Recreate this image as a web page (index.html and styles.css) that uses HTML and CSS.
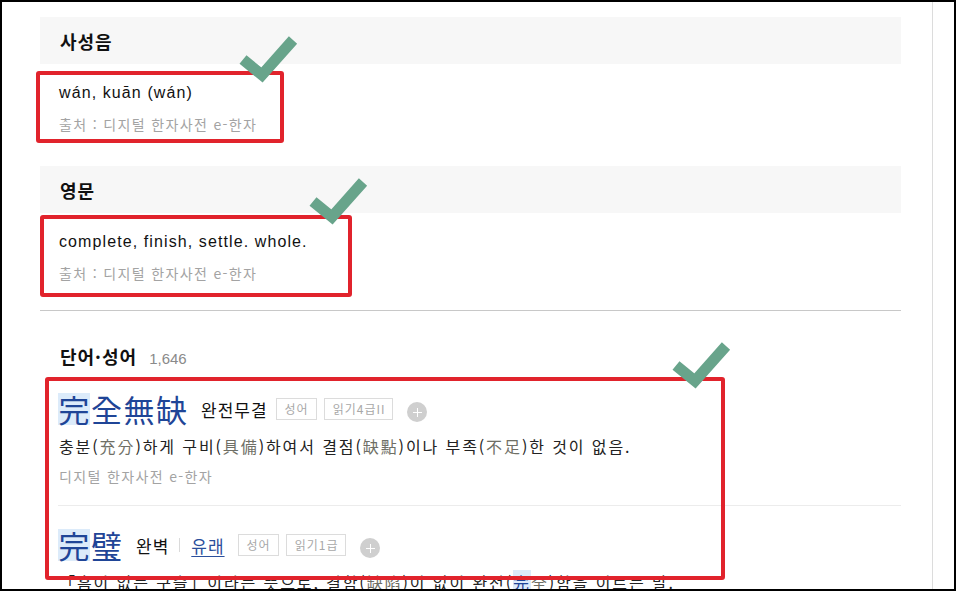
FILE: index.html
```html
<!DOCTYPE html>
<html lang="ko">
<head>
<meta charset="utf-8">
<title>完</title>
<link rel="stylesheet" href="styles.css">
</head>
<body>
<div class="frame">
  <main class="main">
    <section class="sec">
      <h3 class="sec-head">사성음</h3>
      <div class="sec-body">
        <p class="val">wán, kuān (wán)</p>
        <p class="src">출처 : 디지털 한자사전 e-한자</p>
      </div>
    </section>
    <section class="sec sec-en">
      <h3 class="sec-head">영문</h3>
      <div class="sec-body">
        <p class="val">complete, finish, settle. whole.</p>
        <p class="src">출처 : 디지털 한자사전 e-한자</p>
      </div>
    </section>
    <hr class="divider">
    <section class="words">
      <h3 class="words-head">단어·성어 <span class="count">1,646</span></h3>
      <ul class="word-list">
        <li class="word">
          <div class="word-row">
            <span class="hanja"><span class="ch hl">完</span><span class="ch">全</span><span class="ch">無</span><span class="ch">缺</span></span>
            <span class="reading">완전무결</span>
            <span class="tags"><span class="tag">성어</span><span class="tag">읽기4급II</span></span>
            <span class="plus"></span>
          </div>
          <p class="def">충분(<span class="hj">充分</span>)하게 구비(<span class="hj">具備</span>)하여서 결점(<span class="hj">缺點</span>)이나 부족(<span class="hj">不足</span>)한 것이 없음.</p>
          <p class="src">디지털 한자사전 e-한자</p>
        </li>
        <li class="word">
          <div class="word-row">
            <span class="hanja"><span class="ch hl">完</span><span class="ch">璧</span></span>
            <span class="reading">완벽</span>
            <span class="sep"></span>
            <a class="origin" href="#">유래</a>
            <span class="tags"><span class="tag">성어</span><span class="tag">읽기1급</span></span>
            <span class="plus"></span>
          </div>
          <p class="def">「흠이 없는 구슬」이라는 뜻으로, 결함(<span class="hj">缺陷</span>)이 없이 완전(<span class="hj"><span class="hl">完</span>全</span>)함을 이르는 말.</p>
        </li>
      </ul>
    </section>
  </main>
  <aside class="side"></aside>
</div>

<div class="box box-1"></div>
<div class="box box-2"></div>
<div class="box box-3"></div>

<svg class="check check-1" width="64" height="56" viewBox="0 0 64 56"><polyline points="7,27.5 26,43 57,8"/></svg>
<svg class="check check-2" width="64" height="56" viewBox="0 0 64 56"><polyline points="7,27.5 26,43 57,8"/></svg>
<svg class="check check-3" width="64" height="56" viewBox="0 0 64 56"><polyline points="7,27.5 26,43 57,8"/></svg>
</body>
</html>
```

FILE: styles.css
```css
* { box-sizing: border-box; }

html, body {
  margin: 0;
  padding: 0;
  background: #fff;
}

body {
  position: relative;
  width: 956px;
  height: 591px;
  overflow: hidden;
  font-family: "Noto Sans CJK KR", "Liberation Sans", sans-serif;
  color: #222;
}

.frame {
  width: 956px;
  height: 591px;
  border: 2px solid #000;
  display: flex;
  overflow: hidden;
}

.main {
  width: 861px;
  margin-left: 38px;
  flex: none;
}

.side {
  margin-left: 31px;
  flex: 1;
  border-left: 1px solid #dcdcdc;
}

p, h3, ul { margin: 0; padding: 0; }

.sec { margin-top: 15px; }
.sec + .sec { margin-top: 32px; }

.sec-head {
  height: 47px;
  background: #f7f7f7;
  padding-left: 20px;
  display: flex;
  align-items: center;
  font-size: 18px;
  font-weight: 700;
  letter-spacing: 1px;
  color: #111;
}

.sec-body { padding-left: 19px; }

.val {
  margin-top: 18px;
  font-family: "Liberation Sans", "Noto Sans CJK KR", sans-serif;
  font-size: 16px;
  line-height: 22px;
  letter-spacing: 1.1px;
  color: #111;
}

.src {
  margin-top: 10px;
  font-size: 14px;
  line-height: 20px;
  letter-spacing: 1.35px;
  color: #a3a3a3;
}

.divider {
  margin: 27px 0 0;
  border: 0;
  border-top: 1px solid #c8c8c8;
  height: 0;
}

.words-head {
  margin-top: 33px;
  padding-left: 20px;
  font-size: 18px;
  line-height: 24px;
  font-weight: 700;
  letter-spacing: 1px;
  color: #111;
}

.count {
  font-family: "Liberation Sans", sans-serif;
  font-weight: 400;
  font-size: 15px;
  letter-spacing: 0;
  color: #8a8a8a;
  margin-left: 6px;
}

.word-list {
  list-style: none;
  margin-left: 18px;
  margin-top: 18px;
}

.word + .word {
  border-top: 1px solid #ececec;
  margin-top: 19px;
  padding-top: 19px;
}

.word-row {
  height: 40px;
  display: flex;
  align-items: center;
}

.hanja {
  display: flex;
  color: #1f4597;
}

.ch {
  display: block;
  font-size: 31px;
  line-height: 32px;
  height: 32px;
  width: 32px;
  text-align: center;
  margin-right: 0.5px;
}

.hl { background: #dcebfa; }

.reading {
  margin-left: 13px;
  font-size: 17px;
  letter-spacing: 1px;
  color: #111;
}

.sep {
  width: 1px;
  height: 14px;
  background: #dadada;
  margin: 0 11px 0 10px;
}

.origin {
  font-size: 17px;
  letter-spacing: 1px;
  color: #2b4f9c;
  text-decoration: underline;
  text-underline-offset: 3px;
}

.tags {
  display: flex;
  gap: 7px;
  margin-left: 8px;
}

.origin + .tags { margin-left: 13px; }

.tag {
  border: 1px solid #dcdcdc;
  height: 22px;
  line-height: 20px;
  padding: 0 7px 0 8px;
  font-size: 12px;
  letter-spacing: 1px;
  color: #a8a8a8;
}

.plus {
  position: relative;
  width: 20px;
  height: 20px;
  border-radius: 50%;
  background: #cfcfcf;
  margin-left: 14px;
  margin-top: 6px;
}

.plus::before,
.plus::after {
  content: "";
  position: absolute;
  left: 50%;
  top: 50%;
  background: #fff;
}

.plus::before { width: 9px; height: 1px; margin: -0.5px 0 0 -4.5px; }
.plus::after { width: 1px; height: 9px; margin: -4.5px 0 0 -0.5px; }

.def {
  margin-top: 5px;
  padding-left: 1px;
  font-size: 16px;
  line-height: 24px;
  letter-spacing: 1.9px;
  color: #222;
  white-space: nowrap;
}

.hj { color: #6f6f66; }
.def .hl { color: #1f4597; }

.word .src { margin-top: 8px; padding-left: 1px; }

/* annotation overlay */
.box {
  position: absolute;
  border: 4px solid #e1232c;
  border-radius: 3px;
}

.box-1 { left: 36px; top: 71px; width: 248px; height: 72px; }
.box-2 { left: 40px; top: 215px; width: 312px; height: 82px; }
.box-3 { left: 45px; top: 377px; width: 680px; height: 203px; }

.check {
  position: absolute;
  overflow: visible;
}

.check polyline {
  fill: none;
  stroke: #68a48b;
  stroke-width: 11;
  stroke-linejoin: miter;
  stroke-linecap: butt;
}

.check-1 { left: 236px; top: 32px; }
.check-2 { left: 306px; top: 174px; }
.check-3 { left: 669px; top: 338px; }
```
